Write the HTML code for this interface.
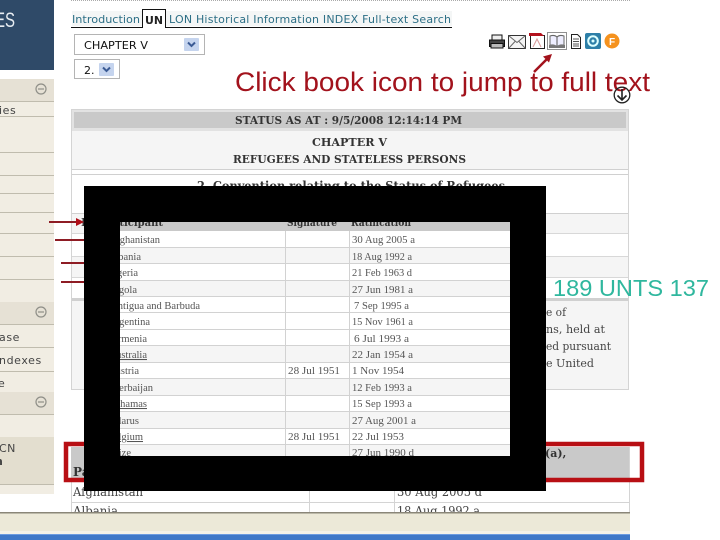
<!DOCTYPE html>
<html><head><meta charset="utf-8"><title>Status</title>
<style>
html,body{margin:0;padding:0;width:720px;height:540px;overflow:hidden;background:#fff}
svg{position:absolute;left:0;top:0;display:block}
.s{font-family:"DejaVu Sans",sans-serif}
.l{font-family:"Liberation Sans",sans-serif}
.b{font-family:"DejaVu Serif",serif;font-weight:bold;fill:#333}
.r{font-family:"DejaVu Serif",serif;fill:#444}
.c{font-family:"Liberation Serif",serif;font-size:10.5px;fill:#555}
</style></head><body>
<svg width="720" height="540" viewBox="0 0 720 540" xmlns="http://www.w3.org/2000/svg">
<!-- left header -->
<rect x="0" y="0" width="54" height="70" fill="#2f4a68"/>
<text x="-5" y="27" class="l" font-size="21" fill="#e8edf2" textLength="20" lengthAdjust="spacingAndGlyphs">ES</text>
<!-- sidebar -->
<rect x="0" y="79" width="54" height="415" fill="#f1ede3"/>
<rect x="0" y="79" width="54" height="22" fill="#e6e1d5"/>
<rect x="0" y="302" width="54" height="22" fill="#e6e1d5"/>
<rect x="0" y="392" width="54" height="22" fill="#e6e1d5"/>
<rect x="0" y="437" width="54" height="47" fill="#e3decf"/>
<g fill="#c0bcae">
<rect x="0" y="101" width="54" height="1"/><rect x="0" y="116" width="54" height="1"/>
<rect x="0" y="152" width="54" height="1"/><rect x="0" y="175" width="54" height="1"/>
<rect x="0" y="193" width="54" height="1"/><rect x="0" y="212" width="54" height="1"/>
<rect x="0" y="233" width="54" height="1"/><rect x="0" y="256" width="54" height="1"/>
<rect x="0" y="279" width="54" height="1"/><rect x="0" y="324" width="54" height="1"/>
<rect x="0" y="347" width="54" height="1"/><rect x="0" y="371" width="54" height="1"/>
<rect x="0" y="414" width="54" height="1"/><rect x="0" y="484" width="54" height="1"/>
</g>
<g fill="none" stroke="#8f8f88" stroke-width="1.2">
<circle cx="41" cy="89" r="5"/><path d="M38 89h6"/>
<circle cx="41" cy="312" r="5"/><path d="M38 312h6"/>
<circle cx="41" cy="402" r="5"/><path d="M38 402h6"/>
</g>
<g class="s" font-size="11" fill="#444">
<text x="-1" y="114" letter-spacing=".6">ies</text>
<text x="-1" y="341" letter-spacing=".6">ase</text>
<text x="-1" y="364" letter-spacing=".6">ndexes</text>
<text x="-2" y="387">e</text>
<text x="-1" y="452" letter-spacing=".4">CN</text>
<text x="-5" y="465" font-weight="bold">n</text>
</g>

<!-- top dotted -->
<path d="M71 .5H630" stroke="#aaa" stroke-dasharray="1 1" fill="none"/>
<!-- tabs -->
<rect x="72" y="11" width="70" height="15" fill="#f4f6f6"/>
<rect x="166" y="11" width="286" height="15" fill="#f4f6f6"/>
<path d="M71 27.5H142.5V9.5H165.5V27.5H452" stroke="#111" fill="none"/>
<text x="72" y="23" class="s" font-size="11" fill="#2d6f86" textLength="68" lengthAdjust="spacingAndGlyphs">Introduction</text>
<text x="145" y="24" class="s" font-size="11" font-weight="bold" fill="#222" textLength="18" lengthAdjust="spacingAndGlyphs">UN</text>
<text x="169" y="23" class="s" font-size="11" fill="#2d6f86" textLength="282" lengthAdjust="spacing">LON Historical Information INDEX Full-text Search</text>
<!-- selects -->
<rect x="74.5" y="34.5" width="130" height="20" fill="#fff" stroke="#b4b4b4"/>
<text x="84" y="49" class="s" font-size="11" fill="#111" textLength="64" lengthAdjust="spacingAndGlyphs">CHAPTER V</text>
<rect x="184" y="38" width="15" height="13" rx="1" fill="#c5d4ee"/>
<path d="M188 42.5l3.5 3.5 3.5-3.5" fill="none" stroke="#3a5a94" stroke-width="2"/>
<rect x="74.5" y="59.5" width="45" height="19" fill="#fff" stroke="#b4b4b4"/>
<text x="84" y="74" class="s" font-size="11" fill="#111">2.</text>
<rect x="99" y="63" width="15" height="13" rx="1" fill="#c5d4ee"/>
<path d="M103 67.5l3.5 3.5 3.5-3.5" fill="none" stroke="#3a5a94" stroke-width="2"/>

<!-- icons -->
<g>
<!-- printer -->
<path d="M492 35h10v6h-10z" fill="#eee" stroke="#111"/>
<path d="M489.5 40h15v6.500h-15z" fill="#444" stroke="#111"/>
<path d="M491 43.500h12v4.500h-12z" fill="#bbb" stroke="#111"/>
<!-- envelope -->
<rect x="508.5" y="35.5" width="17" height="13" fill="#f4f4f4" stroke="#333"/>
<path d="M508.5 35.500l8.500 7 8.500-7M508.500 48.500l6.500-7M525.500 48.500l-6.500-7" fill="none" stroke="#666"/>
<!-- pdf -->
<path d="M530.500 35.500h14v13h-14z" fill="#fff" stroke="#222"/>
<path d="M529 33h12l3 3h-15z" fill="#b3121d"/>
<path d="M533 47l4-8 4 8" fill="none" stroke="#d89a9a"/>
<!-- book -->
<rect x="547.500" y="32.500" width="19" height="17" fill="#fff" stroke="#222" stroke-dasharray="1 1"/>
<path d="M550 36c3-1 5-1 7 1 2-2 4-2 7-1v10c-3-1-5-1-7 1-2-2-4-2-7-1z" fill="#eef" stroke="#666"/>
<path d="M557 37v10" stroke="#555"/>
<path d="M549 45c3-1 6-1 8 1.500 2-2.500 5-2.500 8-1.500v3h-16z" fill="#777"/>
<!-- doc -->
<path d="M571.500 34.500h6l3 3v11h-9z" fill="#fff" stroke="#222"/>
<path d="M573 39h6M573 41.500h6M573 44h6M573 46h6" stroke="#555"/>
<!-- blue -->
<rect x="585" y="33" width="16" height="16" rx="2" fill="#2d7fa8"/>
<circle cx="593" cy="41" r="4.800" fill="none" stroke="#dff" stroke-width="2"/>
<circle cx="593" cy="41" r="1.500" fill="#dff"/>
<!-- orange -->
<circle cx="612" cy="41" r="7.500" fill="#f5921e"/>
<text x="612" y="45" text-anchor="middle" class="l" font-size="10" font-weight="bold" fill="#fff">F</text>
</g>

<!-- main table -->
<rect x="71.500" y="109.500" width="557" height="280" fill="#fff" stroke="#d4d4d4"/>
<rect x="72" y="110" width="556" height="21" fill="#e2e2e2"/>
<rect x="74" y="112" width="552" height="16" fill="#c9c9c9"/>
<rect x="72" y="131" width="556" height="38" fill="#f5f5f5"/>
<rect x="72" y="169" width="556" height="1" fill="#d0d0d0"/>
<rect x="72" y="174" width="556" height="1" fill="#d0d0d0"/>
<rect x="72" y="213" width="556" height="1" fill="#d0d0d0"/>
<rect x="72" y="214" width="556" height="19" fill="#f5f5f5"/>
<rect x="72" y="233" width="556" height="1" fill="#d8d8d8"/>
<rect x="72" y="256" width="556" height="1" fill="#d8d8d8"/>
<rect x="72" y="257" width="556" height="20" fill="#f5f5f5"/>
<rect x="72" y="277" width="556" height="1" fill="#d8d8d8"/>
<rect x="72" y="298" width="556" height="3" fill="#d0d0d0"/>
<rect x="72" y="301" width="556" height="88" fill="#f5f5f5"/>

<text x="235" y="124" class="b" font-size="11" textLength="227" lengthAdjust="spacingAndGlyphs">STATUS AS AT : 9/5/2008 12:14:14 PM</text>
<text x="312" y="146" class="b" font-size="11" textLength="75" lengthAdjust="spacingAndGlyphs">CHAPTER V</text>
<text x="233" y="163" class="b" font-size="11" textLength="233" lengthAdjust="spacingAndGlyphs">REFUGEES AND STATELESS PERSONS</text>
<text x="197" y="190" class="b" font-size="12" textLength="308" lengthAdjust="spacingAndGlyphs">2. Convention relating to the Status of Refugees</text>
<text x="81" y="226" class="b" font-size="11">P</text>

<g class="r" font-size="11">
<text x="546" y="316" textLength="20" lengthAdjust="spacingAndGlyphs">e of</text>
<text x="546" y="333" textLength="59" lengthAdjust="spacingAndGlyphs">ns, held at</text>
<text x="546" y="350" textLength="65" lengthAdjust="spacingAndGlyphs">ed pursuant</text>
<text x="546" y="367" textLength="48" lengthAdjust="spacingAndGlyphs">e United</text>
</g>

<!-- lower table -->
<rect x="71" y="447" width="558" height="34" fill="#c9c9c9"/>
<path d="M71.500 481V513M309.500 481V513M394.500 481V513M629.500 447V513M71 502.500H630" stroke="#d4d4d4" fill="none"/>
<text x="73" y="476" class="b" font-size="12">Participant</text>
<text x="545" y="457" class="b" font-size="11">(a),</text>
<text x="73" y="496" class="r" font-size="12" textLength="70" lengthAdjust="spacingAndGlyphs">Afghanistan</text>
<text x="397" y="496" class="r" font-size="12" textLength="85" lengthAdjust="spacingAndGlyphs">30 Aug 2005 d</text>
<text x="73" y="515" class="r" font-size="12" textLength="45" lengthAdjust="spacingAndGlyphs">Albania</text>
<text x="397" y="515" class="r" font-size="12" textLength="83" lengthAdjust="spacingAndGlyphs">18 Aug 1992 a</text>

<!-- red rectangle -->
<rect x="66" y="444" width="576" height="36" fill="none" stroke="#b80f14" stroke-width="4.500"/>

<!-- arrows left -->
<g fill="none" stroke="#8e1c24" stroke-width="2">
<path d="M49 222H79"/><path d="M55 240H86"/><path d="M61 263H86"/><path d="M61 282H86"/>
</g>
<path d="M76 218L84 222 76 226z" fill="#b00f18"/>

<!-- black overlay frame -->
<rect x="120" y="222" width="390" height="234" fill="#fff"/>
<g fill="#f5f5f5">
<rect x="120" y="247" width="390" height="16"/>
<rect x="120" y="280" width="390" height="17"/>
<rect x="120" y="345" width="390" height="17"/>
<rect x="120" y="378" width="390" height="17"/>
<rect x="120" y="411" width="390" height="17"/>
<rect x="120" y="444" width="390" height="12"/>
</g>
<rect x="120" y="222" width="390" height="9" fill="#c9c9c9"/>
<path d="M120 247.500H510M120 263.500H510M120 280.500H510M120 296.500H510M120 312.500H510M120 329.500H510M120 345.500H510M120 362.500H510M120 378.500H510M120 395.500H510M120 411.500H510M120 428.500H510M120 444.500H510M285.500 231V456M349.500 231V456" stroke="#d2d2d2" fill="none"/>
<g class="b" font-size="10">
<text x="163" y="226" text-anchor="end">Participant</text>
<text x="287" y="226" textLength="50" lengthAdjust="spacingAndGlyphs">Signature</text>
<text x="351" y="226" textLength="60" lengthAdjust="spacingAndGlyphs">Ratification</text>
</g>
<g class="c" text-anchor="end">
<text x="160" y="243">Afghanistan</text>
<text x="141" y="260">Albania</text>
<text x="138" y="276">Algeria</text>
<text x="137" y="293">Angola</text>
<text x="200" y="309">Antigua and Barbuda</text>
<text x="150" y="325">Argentina</text>
<text x="147" y="342">Armenia</text>
<text x="147" y="358" text-decoration="underline">Australia</text>
<text x="139" y="374">Austria</text>
<text x="153" y="391">Azerbaijan</text>
<text x="147" y="407" text-decoration="underline">Bahamas</text>
<text x="139" y="424">Belarus</text>
<text x="143" y="440" text-decoration="underline">Belgium</text>
<text x="131" y="456">Belize</text>
</g>
<g class="c">
<text x="288" y="374" textLength="52" lengthAdjust="spacingAndGlyphs">28 Jul 1951</text>
<text x="288" y="440" textLength="52" lengthAdjust="spacingAndGlyphs">28 Jul 1951</text>
<text x="352" y="243" textLength="63" lengthAdjust="spacingAndGlyphs">30 Aug 2005 a</text>
<text x="352" y="260" textLength="60" lengthAdjust="spacingAndGlyphs">18 Aug 1992 a</text>
<text x="352" y="276" textLength="60" lengthAdjust="spacingAndGlyphs">21 Feb 1963 d</text>
<text x="352" y="293" textLength="61" lengthAdjust="spacingAndGlyphs">27 Jun 1981 a</text>
<text x="354" y="309" textLength="55" lengthAdjust="spacingAndGlyphs">7 Sep 1995 a</text>
<text x="352" y="325" textLength="61" lengthAdjust="spacingAndGlyphs">15 Nov 1961 a</text>
<text x="354" y="342" textLength="55" lengthAdjust="spacingAndGlyphs">6 Jul 1993 a</text>
<text x="352" y="358" textLength="61" lengthAdjust="spacingAndGlyphs">22 Jan 1954 a</text>
<text x="352" y="374" textLength="52" lengthAdjust="spacingAndGlyphs">1 Nov 1954</text>
<text x="352" y="391" textLength="60" lengthAdjust="spacingAndGlyphs">12 Feb 1993 a</text>
<text x="352" y="407" textLength="60" lengthAdjust="spacingAndGlyphs">15 Sep 1993 a</text>
<text x="352" y="424" textLength="64" lengthAdjust="spacingAndGlyphs">27 Aug 2001 a</text>
<text x="352" y="440" textLength="52" lengthAdjust="spacingAndGlyphs">22 Jul 1953</text>
<text x="352" y="456" textLength="62" lengthAdjust="spacingAndGlyphs">27 Jun 1990 d</text>
</g>
<path fill-rule="evenodd" d="M84 186H546V491H84zM120 222V456H510V222z" fill="#000"/>

<!-- bottom browser chrome -->
<rect x="0" y="512" width="630" height="28" fill="#ece9d8"/>
<rect x="0" y="512" width="630" height="1.500" fill="#8a8678"/>
<rect x="0" y="531" width="630" height="3" fill="#f4f2e8"/>
<rect x="0" y="534" width="630" height="6" fill="#3f78c8"/>
<rect x="0" y="534" width="630" height="1" fill="#6c9be0"/>

<!-- overlay text -->
<text x="235" y="91" class="l" font-size="27" fill="#a2121c" textLength="415" lengthAdjust="spacingAndGlyphs">Click book icon to jump to full text</text>
<text x="553" y="296" class="l" font-size="23" fill="#2fb79e" textLength="156" lengthAdjust="spacingAndGlyphs">189 UNTS 137</text>
<path d="M534 72L548 58" stroke="#a2121c" stroke-width="2.500" fill="none"/>
<path d="M552 54l-9 2.500 6 6z" fill="#a2121c"/>
<circle cx="622" cy="95" r="7.800" fill="none" stroke="#222" stroke-width="1.300"/>
<path d="M622 89v11M617.500 95.500l4.500 4.500 4.500-4.500" fill="none" stroke="#222" stroke-width="1.600"/>
</svg>
</body></html>
